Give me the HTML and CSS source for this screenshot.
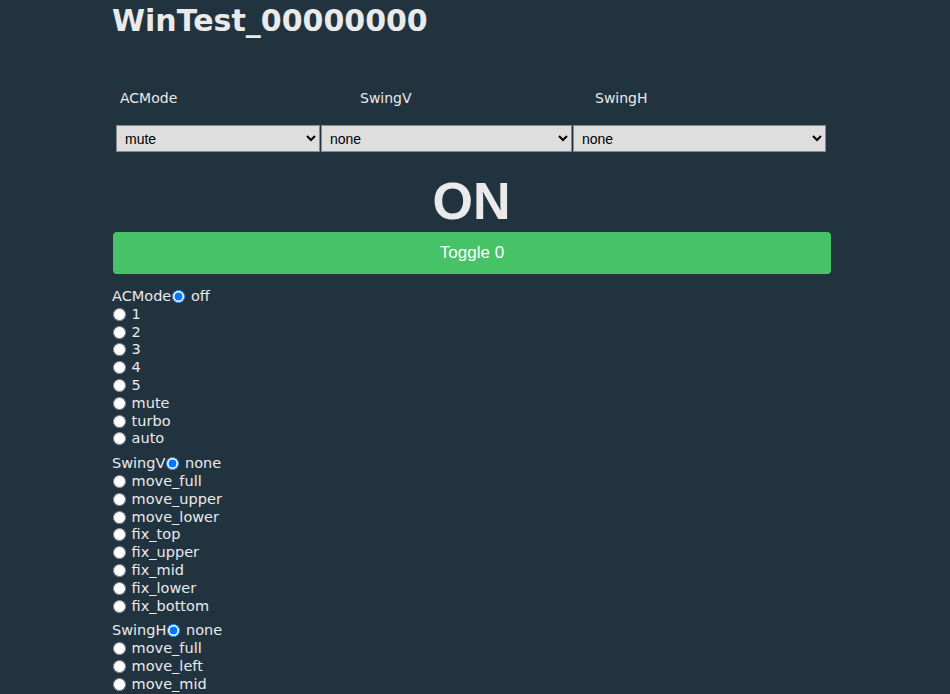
FILE: index.html
```html
<!DOCTYPE html>
<html lang="en">
<head>
<meta charset="UTF-8" />
<meta name="viewport" content="width=device-width, initial-scale=1" />
<title>WinTest_00000000</title>
<link rel="stylesheet" href="styles.css">
</head>
<body>

<div class="container">
  <h1 class="title">WinTest_00000000</h1>

  <div class="select-labels">
    <span>ACMode</span>
    <span>SwingV</span>
    <span>SwingH</span>
  </div>
  <div class="select-row">
    <select class="sel-acmode">
      <option>off</option><option>1</option><option>2</option><option>3</option><option>4</option><option>5</option>
      <option selected>mute</option><option>turbo</option><option>auto</option>
    </select>
    <select class="sel-swingv">
      <option selected>none</option><option>move_full</option><option>move_upper</option><option>move_lower</option>
      <option>fix_top</option><option>fix_upper</option><option>fix_mid</option><option>fix_lower</option><option>fix_bottom</option>
    </select>
    <select class="sel-swingh">
      <option selected>none</option><option>move_full</option><option>move_left</option><option>move_mid</option>
    </select>
  </div>

  <div class="state">ON</div>
  <button class="toggle-btn">Toggle 0</button>

  <form class="radio-group">
    ACMode<input type="radio" name="acmode" checked> off<br>
    <input type="radio" name="acmode"> 1<br>
    <input type="radio" name="acmode"> 2<br>
    <input type="radio" name="acmode"> 3<br>
    <input type="radio" name="acmode"> 4<br>
    <input type="radio" name="acmode"> 5<br>
    <input type="radio" name="acmode"> mute<br>
    <input type="radio" name="acmode"> turbo<br>
    <input type="radio" name="acmode"> auto<br>
  </form>

  <form class="radio-group">
    SwingV<input type="radio" name="swingv" checked> none<br>
    <input type="radio" name="swingv"> move_full<br>
    <input type="radio" name="swingv"> move_upper<br>
    <input type="radio" name="swingv"> move_lower<br>
    <input type="radio" name="swingv"> fix_top<br>
    <input type="radio" name="swingv"> fix_upper<br>
    <input type="radio" name="swingv"> fix_mid<br>
    <input type="radio" name="swingv"> fix_lower<br>
    <input type="radio" name="swingv"> fix_bottom<br>
  </form>

  <form class="radio-group">
    SwingH<input type="radio" name="swingh" checked> none<br>
    <input type="radio" name="swingh"> move_full<br>
    <input type="radio" name="swingh"> move_left<br>
    <input type="radio" name="swingh"> move_mid<br>
    <input type="radio" name="swingh"> move_right<br>
    <input type="radio" name="swingh"> fix_left<br>
    <input type="radio" name="swingh"> fix_mid<br>
    <input type="radio" name="swingh"> fix_right<br>
  </form>
</div>

</body>
</html>
```

FILE: styles.css
```css
body {
  font-family: "DejaVu Sans", Verdana, sans-serif;
  background: #223340;
  color: #eaeaea;
  margin: 0;
  padding: 0;
}
.container {
  width: 719px;
  margin-left: 112px;
}
.title {
  font-size: 30px;
  font-weight: bold;
  margin: 0;
  padding-top: 2px;
  line-height: 38px;
}
/* labels au-dessus des listes */
.select-labels {
  display: grid;
  grid-template-columns: 240px 235px auto;
  padding-left: 8px;
  margin-top: 50px;
  font-size: 14px;
}
.select-row {
  display: flex;
  gap: 1px;
  margin-top: 19px;
  padding-left: 4px;
}
.select-row select {
  height: 27px;
  background: #dedede;
  color: #000;
  border: 1px solid #8a8a8a;
  font-family: "Liberation Sans", Arial, sans-serif;
  font-size: 14px;
  padding-left: 4px;
}
.sel-acmode { width: 204px; }
.sel-swingv { width: 251px; }
.sel-swingh { width: 253px; }
/* etat */
.state {
  text-align: center;
  font-family: "Liberation Sans", Arial, sans-serif;
  font-weight: bold;
  font-size: 52px;
  line-height: 60px;
  margin-top: 19px;
}
.toggle-btn {
  display: block;
  width: 718px;
  height: 42px;
  margin: 1px 0 0 1px;
  background: #46c366;
  border: none;
  border-radius: 4px;
  color: #fff;
  font-family: "Liberation Sans", Arial, sans-serif;
  font-size: 17px;
  cursor: pointer;
}
.radio-group {
  font-size: 14.5px;
  line-height: 17.8px;
  margin: 14px 0 0;
}
.radio-group + .radio-group {
  margin-top: 7px;
}
.radio-group input[type="radio"] {
  margin: 0 1px 0 1px;
  vertical-align: -2px;
}
```
